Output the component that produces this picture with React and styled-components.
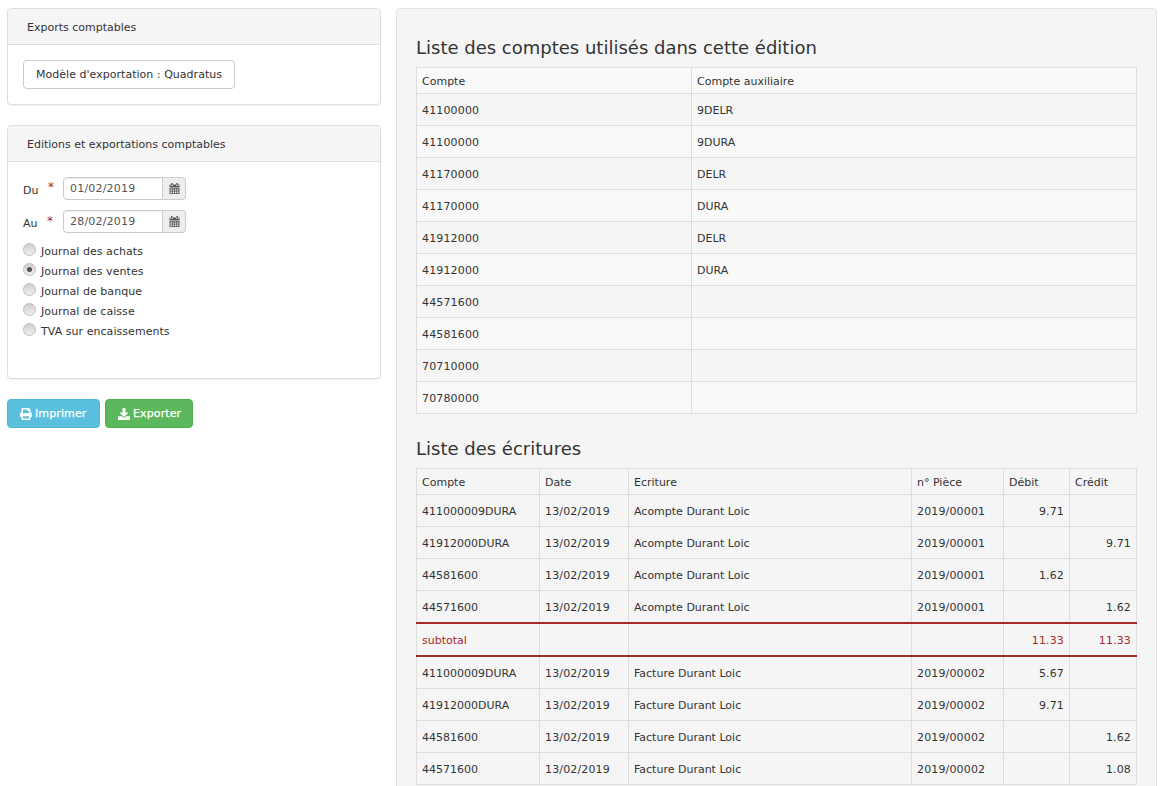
import React from 'react';
import styled, { createGlobalStyle } from 'styled-components';
import { FaPrint, FaDownload } from 'react-icons/fa';

const Global = createGlobalStyle`
  html, body { margin: 0; padding: 0; height: 786px; overflow: hidden; background: #fff; }
  body { font-family: "DejaVu Sans", Verdana, sans-serif; font-size: 11px; color: #333; }
`;
const Page = styled.div`
  display: grid; grid-template-columns: 374px 761px; column-gap: 15px;
  padding: 8px 8px 0 7px; height: 778px; overflow: hidden; align-items: start;
`;
const Side = styled.aside`display: flex; flex-direction: column;`;
const Panel = styled.section`
  background: #fff; border: 1px solid #ddd; border-radius: 4px;
  box-shadow: 0 1px 1px rgba(0,0,0,.05); margin-bottom: 20px; overflow: hidden;
`;
const PanelHead = styled.header`
  background: #f5f5f5; border-bottom: 1px solid #ddd; height: 34px; padding: 1px 0 0 19px; line-height: 35px;
`;
const PanelBody = styled.div`
  height: ${p => p.$h}px; padding: ${p => p.$pt}px 15px 0; box-sizing: border-box;
`;
const PlainButton = styled.button`
  font: inherit; color: #333; background: #fff; border: 1px solid #ccc; border-radius: 4px;
  height: 29px; padding: 0 12px; display: block; letter-spacing: .03px;
`;
const DateRow = styled.div`display: flex; align-items: flex-start; height: 23px; margin-bottom: 10px;`;
const DateLabel = styled.label`width: 24px; padding-top: 7px; line-height: 14px;`;
const Star = styled.span`
  width: ${p => p.$w}px; padding-left: ${p => 16 - p.$w}px; color: #a52a2a; font-size: 12px;
  padding-top: ${p => p.$top}px; line-height: 14px;
`;
const DateInput = styled.div`
  width: 100px; height: 23px; box-sizing: border-box; border: 1px solid #ccc; border-radius: 4px 0 0 4px;
  padding-left: 6px; line-height: 22px; background: #fff; box-shadow: inset 0 1px 1px rgba(0,0,0,.075); color: #555;
  letter-spacing: .2px;
`;
const DateAddon = styled.div`
  width: 23px; height: 23px; box-sizing: border-box; border: 1px solid #ccc; border-left: 0; border-radius: 0 4px 4px 0;
  background: #eee; color: #555; display: flex; align-items: center; justify-content: center;
`;
const RadioList = styled.div`display: flex; flex-direction: column; margin-top: -2px;`;
const RadioRow = styled.label`display: flex; align-items: center; height: 20px; gap: 5px; letter-spacing: .05px;`;
const RadioDot = styled.span`
  width: 13px; height: 13px; box-sizing: border-box; border-radius: 50%; border: 1px solid #bdbdbd; margin-top: -3px;
  background: linear-gradient(#cfcfcf, #efefef); display: flex; align-items: center; justify-content: center;
  &::after { content: ""; width: 5px; height: 5px; border-radius: 50%; background: ${p => p.$on ? '#555' : 'transparent'}; }
`;
const Actions = styled.div`display: flex; gap: 5px;`;
const ActionButton = styled.button`
  font: 400 11px "DejaVu Sans", Verdana, sans-serif; color: #fff; background: ${p => p.$bg}; border: 1px solid ${p => p.$bd};
  border-radius: 4px; width: ${p => p.$w}px; height: 29px; padding: 0 0 0 12px; display: flex; align-items: center; gap: 3px;
  -webkit-text-stroke: .25px #fff; letter-spacing: .12px;
`;
const Main = styled.main`
  background: #f5f5f5; border: 1px solid #e3e3e3; border-radius: 4px 4px 0 0; height: 790px; padding: 0 19px; box-sizing: border-box; overflow: hidden;
`;
const Title = styled.h2`
  font-weight: 400; font-size: 18px; line-height: 20px; color: #333; margin: ${p => p.$mt}px 0 9px;
`;
const Table = styled.table`
  border-collapse: collapse; table-layout: fixed; width: 721px; font-size: 11px;
`;
const Th = styled.th`
  font-weight: 400; text-align: left; padding: 1px 5px 0; height: 24px; border: 1px solid #ddd; background: ${p => p.$bg || 'transparent'};
`;
const Tr = styled.tr`background: ${p => p.$alt ? '#f9f9f9' : 'transparent'};`;
const Td = styled.td`
  height: 29px; padding: 2px 5px 0; border: 1px solid #ddd; text-align: ${p => p.$r ? 'right' : 'left'};
  color: ${p => p.$red ? '#a52a2a' : '#333'};
  letter-spacing: ${p => p.$num ? '.15px' : '0'};
  ${p => p.$total && 'border-top: 2px solid #a52a2a; border-bottom: 2px solid #a52a2a;'}
`;

const CalendarIcon = () => (
  <svg width="11" height="11" viewBox="0 0 11 11" fill="currentColor" aria-hidden="true">
    <rect x="2" y="0" width="1.6" height="2.6" rx=".5" />
    <rect x="7.4" y="0" width="1.6" height="2.6" rx=".5" />
    <path d="M.5 1.5h1v1.4h2.5V1.5h3v1.4h2.5V1.5h1V4H.5z" />
    <path fillRule="evenodd" d="M.5 4.6h10V11H.5zM1.4 5.4v1.1h1.7V5.4zm2.5 0v1.1h1.3V5.4zm2.1 0v1.1h1.3V5.4zm2.1 0v1.1h1.4V5.4zM1.4 7.3v1.1h1.7V7.3zm2.5 0v1.1h1.3V7.3zm2.1 0v1.1h1.3V7.3zm2.1 0v1.1h1.4V7.3zM1.4 9.1v1.1h1.7V9.1zm2.5 0v1.1h1.3V9.1zm2.1 0v1.1h1.3V9.1zm2.1 0v1.1h1.4V9.1z" />
  </svg>
);

const accounts = [
  ['41100000','9DELR'],['41100000','9DURA'],['41170000','DELR'],['41170000','DURA'],['41912000','DELR'],
  ['41912000','DURA'],['44571600',''],['44581600',''],['70710000',''],['70780000',''],
];
const entries = [
  ['411000009DURA','13/02/2019','Acompte Durant Loic','2019/00001','9.71',''],
  ['41912000DURA','13/02/2019','Acompte Durant Loic','2019/00001','','9.71'],
  ['44581600','13/02/2019','Acompte Durant Loic','2019/00001','1.62',''],
  ['44571600','13/02/2019','Acompte Durant Loic','2019/00001','','1.62'],
  null,
  ['411000009DURA','13/02/2019','Facture Durant Loic','2019/00002','5.67',''],
  ['41912000DURA','13/02/2019','Facture Durant Loic','2019/00002','9.71',''],
  ['44581600','13/02/2019','Facture Durant Loic','2019/00002','','1.62'],
  ['44571600','13/02/2019','Facture Durant Loic','2019/00002','','1.08'],
];
const journals = ['Journal des achats','Journal des ventes','Journal de banque','Journal de caisse','TVA sur encaissements'];

export default function App() {
  return (
    <>
      <Global />
      <Page>
        <Side>
          <Panel>
            <PanelHead>Exports comptables</PanelHead>
            <PanelBody $h={59} $pt={15}><PlainButton>Modèle d'exportation : Quadratus</PlainButton></PanelBody>
          </Panel>
          <Panel>
            <PanelHead>Editions et exportations comptables</PanelHead>
            <PanelBody $h={216} $pt={15}>
              <DateRow>
                <DateLabel>Du</DateLabel><Star $w={15} $top={3}>*</Star>
                <DateInput>01/02/2019</DateInput><DateAddon><CalendarIcon /></DateAddon>
              </DateRow>
              <DateRow>
                <DateLabel>Au</DateLabel><Star $w={16} $top={4}>*</Star>
                <DateInput>28/02/2019</DateInput><DateAddon><CalendarIcon /></DateAddon>
              </DateRow>
              <RadioList>
                {journals.map((j, i) => <RadioRow key={j}><RadioDot $on={i === 1} />{j}</RadioRow>)}
              </RadioList>
            </PanelBody>
          </Panel>
          <Actions>
            <ActionButton $w={93} $bg="#5bc0de" $bd="#46b8da"><FaPrint size={12} />Imprimer</ActionButton>
            <ActionButton $w={88} $bg="#5cb85c" $bd="#4cae4c"><FaDownload size={12} />Exporter</ActionButton>
          </Actions>
        </Side>
        <Main>
          <Title $mt={29}>Liste des comptes utilisés dans cette édition</Title>
          <Table>
            <colgroup><col style={{ width: 275 }} /><col /></colgroup>
            <thead><tr><Th $bg="#f9f9f9">Compte</Th><Th $bg="#f9f9f9">Compte auxiliaire</Th></tr></thead>
            <tbody>
              {accounts.map((a, i) => (
                <Tr key={i} $alt={i % 2 === 1}><Td $num>{a[0]}</Td><Td>{a[1]}</Td></Tr>
              ))}
            </tbody>
          </Table>
          <Title $mt={25}>Liste des écritures</Title>
          <Table>
            <colgroup>
              <col style={{ width: 123 }} /><col style={{ width: 89 }} /><col style={{ width: 283 }} />
              <col style={{ width: 92 }} /><col style={{ width: 66 }} /><col style={{ width: 67 }} />
            </colgroup>
            <thead><tr><Th>Compte</Th><Th>Date</Th><Th>Ecriture</Th><Th>n° Pièce</Th><Th>Débit</Th><Th>Crédit</Th></tr></thead>
            <tbody>
              {entries.map((e, i) => e ? (
                <tr key={i}><Td>{e[0]}</Td><Td $num>{e[1]}</Td><Td>{e[2]}</Td><Td $num>{e[3]}</Td><Td $r $num>{e[4]}</Td><Td $r $num>{e[5]}</Td></tr>
              ) : (
                <tr key={i}>
                  <Td $total $red>subtotal</Td><Td $total /><Td $total /><Td $total />
                  <Td $total $red $r $num>11.33</Td><Td $total $red $r $num>11.33</Td>
                </tr>
              ))}
            </tbody>
          </Table>
        </Main>
      </Page>
    </>
  );
}
